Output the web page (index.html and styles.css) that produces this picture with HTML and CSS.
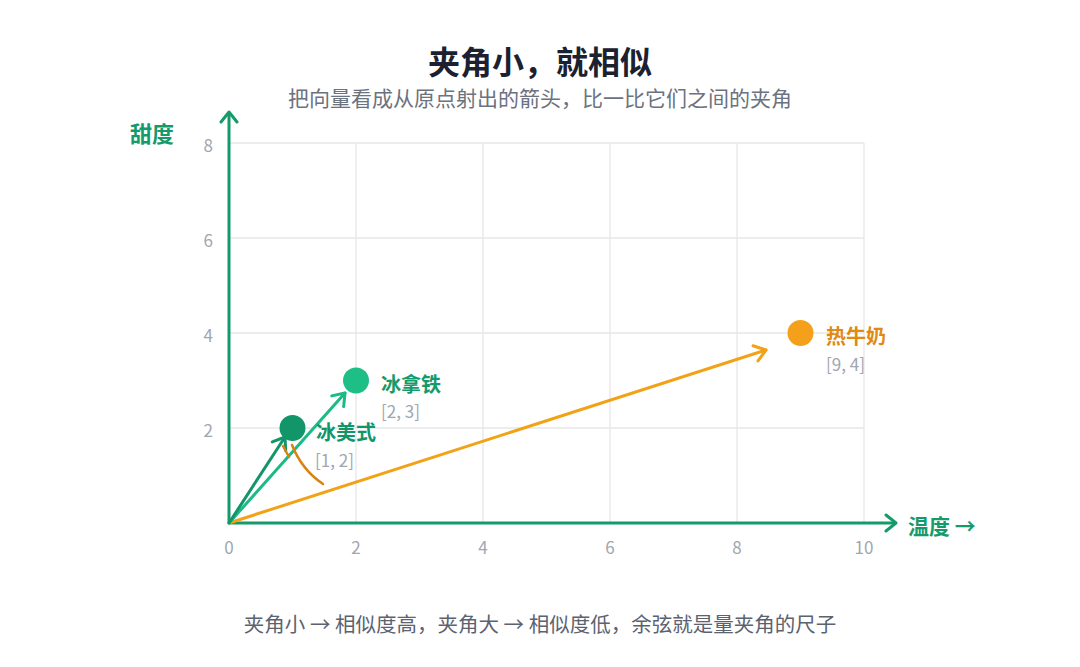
FILE: index.html
```html
<!DOCTYPE html>
<html lang="zh">
<head>
<meta charset="utf-8">
<link rel="stylesheet" href="styles.css">
</head>
<body>
<main class="page">
  <h1 class="title">夹角小，就相似</h1>
  <p class="subtitle">把向量看成从原点射出的箭头，比一比它们之间的夹角</p>
  <svg class="chart" viewBox="0 110 1080 496" width="1080" height="496" xmlns="http://www.w3.org/2000/svg">
    <defs>
      <marker id="mAxis" markerUnits="userSpaceOnUse" viewBox="0 0 14 20" refX="12" refY="10" markerWidth="14" markerHeight="20" orient="auto">
        <path d="M2,2 L12,10 L2,18" fill="none" stroke="#159a6b" stroke-width="3" stroke-linecap="round" stroke-linejoin="round"/>
      </marker>
      <marker id="mDark" markerUnits="userSpaceOnUse" viewBox="0 0 16 20" refX="13" refY="10" markerWidth="16" markerHeight="20" orient="auto">
        <path d="M2,2 L13,10 L2,18" fill="none" stroke="#13956a" stroke-width="3" stroke-linecap="round" stroke-linejoin="round"/>
      </marker>
      <marker id="mLight" markerUnits="userSpaceOnUse" viewBox="0 0 16 20" refX="13" refY="10" markerWidth="16" markerHeight="20" orient="auto">
        <path d="M2,2 L13,10 L2,18" fill="none" stroke="#1bbb85" stroke-width="3" stroke-linecap="round" stroke-linejoin="round"/>
      </marker>
      <marker id="mOrange" markerUnits="userSpaceOnUse" viewBox="0 0 16 20" refX="13" refY="10" markerWidth="16" markerHeight="20" orient="auto">
        <path d="M2,2 L13,10 L2,18" fill="none" stroke="#f2a216" stroke-width="3" stroke-linecap="round" stroke-linejoin="round"/>
      </marker>
    </defs>

    <g class="grid">
      <line x1="356" y1="143" x2="356" y2="523"/>
      <line x1="483" y1="143" x2="483" y2="523"/>
      <line x1="610" y1="143" x2="610" y2="523"/>
      <line x1="737" y1="143" x2="737" y2="523"/>
      <line x1="864" y1="143" x2="864" y2="523"/>
      <line x1="229" y1="143" x2="864" y2="143"/>
      <line x1="229" y1="238" x2="864" y2="238"/>
      <line x1="229" y1="333" x2="864" y2="333"/>
      <line x1="229" y1="428" x2="864" y2="428"/>
    </g>

    <g class="ticks-y">
      <text x="213" y="144">8</text>
      <text x="213" y="239">6</text>
      <text x="213" y="334">4</text>
      <text x="213" y="429">2</text>
    </g>
    <g class="ticks-x">
      <text x="229" y="546">0</text>
      <text x="356" y="546">2</text>
      <text x="483" y="546">4</text>
      <text x="610" y="546">6</text>
      <text x="737" y="546">8</text>
      <text x="864" y="546">10</text>
    </g>

    <line class="axis" x1="229" y1="523" x2="229" y2="112" marker-end="url(#mAxis)"/>
    <line class="axis" x1="229" y1="523" x2="896" y2="523" marker-end="url(#mAxis)"/>
    <text class="axis-label" x="130" y="132">甜度</text>
    <text class="axis-label axis-label-x" x="908" y="525">温度 →</text>

    <line class="vec vec-orange" x1="229" y1="523" x2="766" y2="350" marker-end="url(#mOrange)"/>
    <line class="vec vec-light" x1="229" y1="523" x2="345" y2="393" marker-end="url(#mLight)"/>
    <line class="vec vec-dark" x1="229" y1="523" x2="285" y2="437" marker-end="url(#mDark)"/>

    <path class="arc" d="M292,445 Q302,470 323,484"/>
    <path class="arc" d="M283,446 L289,457"/>

    <circle class="dot-dark" cx="292.5" cy="428" r="13"/>
    <circle class="dot-light" cx="356" cy="380.5" r="13"/>
    <circle class="dot-orange" cx="800.5" cy="333" r="13"/>

    <text class="name name-dark" x="316" y="431">冰美式</text>
    <text class="coord" x="315" y="459">[1, 2]</text>
    <text class="name name-light" x="381" y="383">冰拿铁</text>
    <text class="coord" x="381" y="410">[2, 3]</text>
    <text class="name name-orange" x="826" y="335">热牛奶</text>
    <text class="coord" x="826" y="363">[9, 4]</text>
  </svg>
  <p class="footer">夹角小 → 相似度高，夹角大 → 相似度低，余弦就是量夹角的尺子</p>
</main>
</body>
</html>
```

FILE: styles.css
```css
html, body {
  margin: 0;
  padding: 0;
  background: #ffffff;
}
body {
  width: 1080px;
  height: 667px;
  overflow: hidden;
  font-family: "Noto Sans CJK SC", "Noto Sans", sans-serif;
}
.page {
  display: flex;
  flex-direction: column;
  align-items: center;
  padding-top: 39px;
}
.title {
  margin: 0;
  font-size: 32px;
  line-height: 42px;
  font-weight: 700;
  color: #1b2130;
}
.subtitle {
  margin: 3px 0 0;
  font-size: 21px;
  line-height: 26px;
  color: #6b7280;
}
.chart {
  display: block;
}
.footer {
  margin: 4px 0 0;
  font-size: 20.5px;
  line-height: 26px;
  color: #5b6270;
}
.grid line {
  stroke: #e6e7ea;
  stroke-width: 1.3;
}
.ticks-y text, .ticks-x text {
  font-size: 17px;
  fill: #a1a6af;
  dominant-baseline: central;
}
.ticks-y text { text-anchor: end; }
.ticks-x text { text-anchor: middle; }
.axis {
  stroke: #159a6b;
  stroke-width: 3;
}
.axis-label {
  font-size: 22px;
  font-weight: 700;
  fill: #159a6b;
  dominant-baseline: central;
}
.axis-label-x {
  font-size: 21px;
}
.vec {
  stroke-width: 3;
  stroke-linecap: round;
}
.vec-dark { stroke: #13956a; }
.vec-light { stroke: #1bbb85; }
.vec-orange { stroke: #f2a216; }
.arc {
  fill: none;
  stroke: #d9820f;
  stroke-width: 2.5;
  stroke-linecap: round;
}
.dot-dark { fill: #13956a; }
.dot-light { fill: #1dbf86; }
.dot-orange { fill: #f4a01a; }
.name {
  font-size: 20px;
  font-weight: 700;
  dominant-baseline: central;
}
.name-dark { fill: #13956a; }
.name-light { fill: #159a6b; }
.name-orange { fill: #e08a12; }
.coord {
  font-size: 17px;
  fill: #a1a6af;
  dominant-baseline: central;
}
```
